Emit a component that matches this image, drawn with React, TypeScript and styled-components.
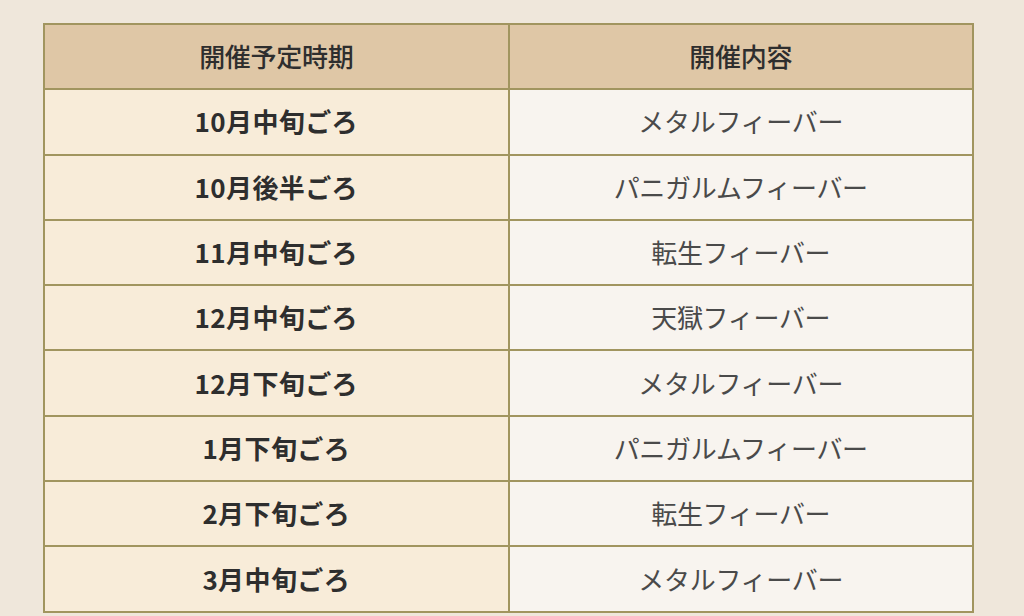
import React from "react";
import styled, { createGlobalStyle } from "styled-components";

const GlobalStyle = createGlobalStyle`
  html, body {
    margin: 0;
    padding: 0;
    background: #efe7db;
  }
  body {
    font-family: "Noto Sans CJK JP", "Noto Sans", sans-serif;
  }
`;

const Page = styled.div`
  width: 1024px;
  height: 616px;
  box-sizing: border-box;
  padding: 23px 50px 0 43px;
  overflow: hidden;
`;

const Table = styled.div`
  display: grid;
  grid-template-columns: 1fr 1fr;
  grid-auto-rows: 63.3px;
  gap: 2px;
  padding: 2px;
  background: #a1955f;
  width: 931px;
  box-sizing: border-box;
`;

const Cell = styled.div<{ $kind: "head" | "date" | "event" }>`
  display: flex;
  align-items: center;
  justify-content: center;
  font-size: 26px;
  letter-spacing: ${({ $kind }) => ($kind === "date" ? "0.4px" : "-0.3px")};
  background: ${({ $kind }) =>
    $kind === "head" ? "#dfc7a6" : $kind === "date" ? "#f8ecd9" : "#f8f4ef"};
  color: ${({ $kind }) => ($kind === "event" ? "#4a4a4a" : "#2e2e2e")};
  font-weight: ${({ $kind }) =>
    $kind === "date" ? 700 : $kind === "head" ? 500 : 400};
  padding-bottom: 2px;
`;

const rows: [string, string][] = [
  ["10月中旬ごろ", "メタルフィーバー"],
  ["10月後半ごろ", "パニガルムフィーバー"],
  ["11月中旬ごろ", "転生フィーバー"],
  ["12月中旬ごろ", "天獄フィーバー"],
  ["12月下旬ごろ", "メタルフィーバー"],
  ["1月下旬ごろ", "パニガルムフィーバー"],
  ["2月下旬ごろ", "転生フィーバー"],
  ["3月中旬ごろ", "メタルフィーバー"],
];

export default function App() {
  return (
    <>
      <GlobalStyle />
      <Page>
        <Table>
          <Cell $kind="head">開催予定時期</Cell>
          <Cell $kind="head">開催内容</Cell>
          {rows.map(([date, event]) => (
            <React.Fragment key={date}>
              <Cell $kind="date">{date}</Cell>
              <Cell $kind="event">{event}</Cell>
            </React.Fragment>
          ))}
        </Table>
      </Page>
    </>
  );
}
